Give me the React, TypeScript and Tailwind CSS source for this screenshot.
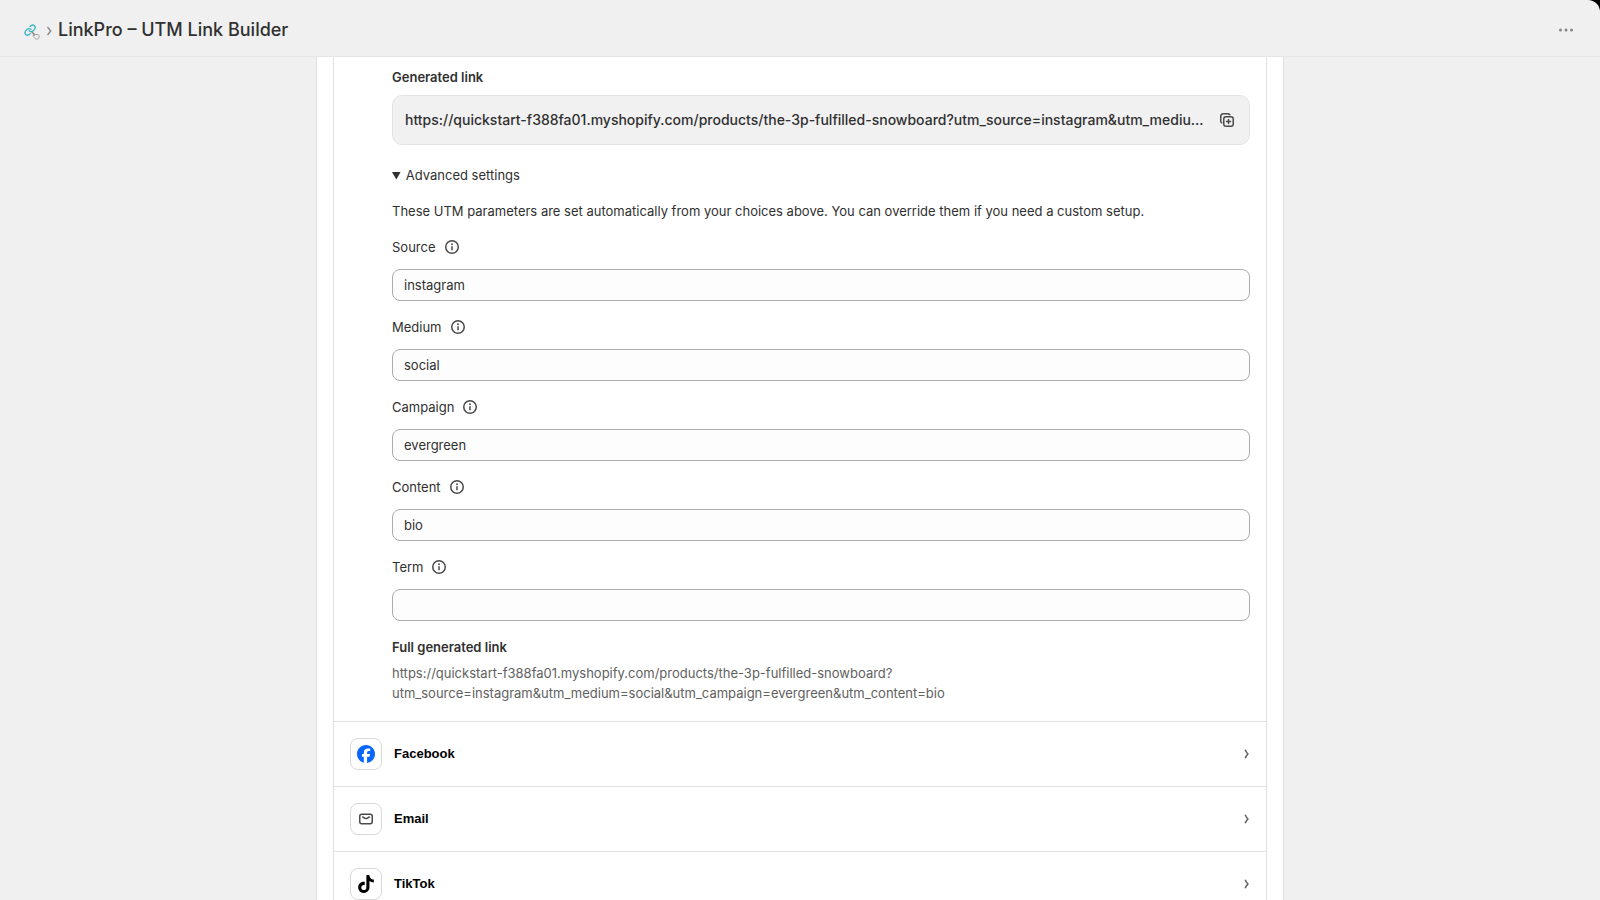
import type { ReactNode } from "react";

const FULL_URL =
  "https://quickstart-f388fa01.myshopify.com/products/the-3p-fulfilled-snowboard?utm_source=instagram&utm_medium=social&utm_campaign=evergreen&utm_content=bio";

const FIELDS = [
  { id: "source", label: "Source", value: "instagram" },
  { id: "medium", label: "Medium", value: "social" },
  { id: "campaign", label: "Campaign", value: "evergreen" },
  { id: "content", label: "Content", value: "bio" },
  { id: "term", label: "Term", value: "" },
];

function AppLogo() {
  return (
    <svg viewBox="0 -4 16 20" className="h-5 w-4" fill="none" aria-hidden="true">
      <g stroke="#3bb9c9" strokeWidth="2.7" strokeLinecap="round" strokeLinejoin="round" transform="scale(0.51)">
        <path d="M10 13a5 5 0 0 0 7.540.540l3-3a5 5 0 0 0-7.070-7.070l-1.720 1.710" />
        <path d="M14 11a5 5 0 0 0-7.540-.540l-3 3a5 5 0 0 0 7.070 7.070l1.710-1.710" />
      </g>
      <path d="M8.200 8.200l2.600 2.900" stroke="#8f8f8f" strokeWidth="1.700" strokeLinecap="round" />
      <path
        d="M10.900 10.300l3.100.4c.9.200 1.300.8 1.200 1.600l-.4 1.600c-.2.700-.6 1.100-1.300 1.100h-1.400c-.5 0-.8-.2-1.100-.6l-1.900-2c-.5-.6 0-1.100.7-.9l.9.300z"
        fill="#f0f0f0"
        stroke="#a0a0a0"
        strokeWidth="1"
        strokeLinejoin="round"
      />
    </svg>
  );
}

function InfoIcon() {
  return (
    <svg viewBox="0 0 20 20" className="size-5" fill="none" aria-hidden="true">
      <circle cx="10" cy="10" r="6.250" stroke="#4a4a4a" strokeWidth="1.500" />
      <path d="M10 9.750v3" stroke="#4a4a4a" strokeWidth="1.500" strokeLinecap="round" />
      <circle cx="10" cy="7.250" r="0.900" fill="#4a4a4a" />
    </svg>
  );
}

function DuplicateIcon() {
  return (
    <svg viewBox="0 0 20 20" className="size-5" fill="none" stroke="#4a4a4a" strokeWidth="1.500" strokeLinecap="round" strokeLinejoin="round" aria-hidden="true">
      <rect x="6.750" y="6.750" width="9.500" height="9.500" rx="2.250" />
      <path d="M4.700 12.800a2.300 2.300 0 0 1-.95-1.900V6.500a2.750 2.750 0 0 1 2.750-2.750h4.400c.8 0 1.500.4 1.900.95" />
      <path d="M11.500 9.500v4M9.500 11.500h4" />
    </svg>
  );
}

function EmailIcon() {
  return (
    <svg viewBox="0 0 20 20" className="size-5" fill="none" stroke="#4a4a4a" strokeWidth="1.500" strokeLinecap="round" strokeLinejoin="round" aria-hidden="true">
      <rect x="3.750" y="5.250" width="12.500" height="9.500" rx="2" />
      <path d="M6.700 8l2.300 1.300c.6.350 1.400.350 2 0l2.300-1.300" />
    </svg>
  );
}

function FacebookIcon() {
  return (
    <svg viewBox="0 0 24 24" className="size-[18px]" aria-hidden="true">
      <circle cx="12" cy="12" r="11.800" fill="#fff" />
      <path
        fill="#0866ff"
        d="M24 12.073c0-6.627-5.373-12-12-12s-12 5.373-12 12c0 5.600 3.870 10.330 9.101 11.630v-7.980H6.627v-3.650h2.474v-1.580c0-4.085 1.848-5.978 5.858-5.978.76 0 2.072.15 2.608.298v3.325c-.283-.03-.775-.045-1.386-.045-1.967 0-2.728.745-2.728 2.683v1.297h3.920l-.673 3.650h-3.247v8.200C19.396 23.200 24 18.180 24 12.073z"
      />
    </svg>
  );
}

function TikTokIcon() {
  return (
    <svg viewBox="0 0 24 24" className="size-[18px]" fill="#000" aria-hidden="true">
      <path d="M12.525.02c1.310-.02 2.610-.01 3.910-.02.08 1.530.63 3.090 1.750 4.170 1.120 1.110 2.700 1.620 4.240 1.790v4.030c-1.440-.05-2.890-.35-4.200-.97-.57-.26-1.100-.59-1.620-.93-.01 2.920.01 5.840-.02 8.750-.08 1.400-.54 2.790-1.350 3.940-1.310 1.920-3.580 3.170-5.910 3.210-1.430.08-2.860-.31-4.080-1.030-2.020-1.190-3.440-3.370-3.650-5.710-.02-.5-.03-1-.01-1.490.18-1.900 1.120-3.720 2.580-4.960 1.660-1.440 3.980-2.130 6.150-1.720.02 1.480-.04 2.960-.04 4.440-.99-.32-2.150-.23-3.020.37-.63.41-1.110 1.040-1.360 1.750-.21.51-.15 1.070-.14 1.610.24 1.640 1.820 3.020 3.500 2.870 1.120-.01 2.190-.66 2.770-1.610.19-.33.4-.67.41-1.060.1-1.790.06-3.570.07-5.360.01-4.030-.01-8.050.02-12.070z" />
    </svg>
  );
}

function PlatformRow({ name, icon }: { name: string; icon: ReactNode }) {
  return (
    <button type="button" className="flex w-full items-center gap-3 border-t border-[#e3e3e3] px-4 py-4 text-left">
      <span className="flex size-8 shrink-0 items-center justify-center rounded-lg border border-[#d9d9d9] bg-white">{icon}</span>
      <span className="flex-1 font-['Liberation_Sans',Arial,sans-serif] text-[13px] leading-5 font-bold text-black">{name}</span>
      <svg viewBox="0 0 6 10" className="h-2.5 w-1.5" fill="none" stroke="#616161" strokeWidth="1.500" aria-hidden="true">
        <path d="M1.200 .8Q2 3 3.900 5Q2 7 1.200 9.200" />
      </svg>
    </button>
  );
}

export default function App() {
  return (
    <div className="h-screen bg-black font-['Inter',sans-serif] text-[13px] leading-5 text-[#303030]">
      <div className="flex h-full flex-col overflow-hidden rounded-tr-xl bg-[#f0f0f0]">
        <header className="flex h-[57px] shrink-0 items-center border-b border-[#e6e6e6] px-6 pt-1">
          <a href="#home" aria-label="LinkPro home">
            <AppLogo />
          </a>
          <svg viewBox="0 -2 6 12" className="mx-1.5 h-3 w-1.5" fill="none" stroke="#8a8a8a" strokeWidth="1.400" aria-hidden="true">
            <path d="M1.500 1L4.700 5 1.500 9" />
          </svg>
          <h1 className="flex-1 text-lg leading-6 font-[550]">LinkPro – UTM Link Builder</h1>
          <button type="button" aria-label="More actions" className="flex size-5 items-center justify-center">
            <svg viewBox="0 0 20 20" className="size-5" fill="#858585" aria-hidden="true">
              <circle cx="4.500" cy="10" r="1.500" />
              <circle cx="10" cy="10" r="1.500" />
              <circle cx="15.500" cy="10" r="1.500" />
            </svg>
          </button>
        </header>

        <main className="min-h-0 flex-1 overflow-hidden">
          <div className="mx-auto max-w-[968px] border-x border-[#e0e0e0] bg-white px-4">
            <div className="border-x border-[#e0e0e0]">
              <section className="pt-2.5 pr-4 pb-[18px] pl-[58px]">
                <h2 className="font-semibold">Generated link</h2>
                <div className="mt-2 flex h-[50px] items-center gap-3 rounded-[10px] border border-[#e3e3e3] bg-[#f1f1f1] px-3">
                  <span className="min-w-0 flex-1 truncate text-sm font-medium">{FULL_URL}</span>
                  <button type="button" aria-label="Copy link">
                    <DuplicateIcon />
                  </button>
                </div>

                <details open className="mt-5">
                  <summary>Advanced settings</summary>
                  <div className="mt-4 flex flex-col gap-4">
                    <p>These UTM parameters are set automatically from your choices above. You can override them if you need a custom setup.</p>
                    {FIELDS.map((field) => (
                      <div key={field.id} className="flex flex-col gap-3">
                        <div className="flex items-center gap-1.5">
                          <label htmlFor={field.id}>{field.label}</label>
                          <button type="button" aria-label={"About " + field.label}>
                            <InfoIcon />
                          </button>
                        </div>
                        <input
                          id={field.id}
                          type="text"
                          defaultValue={field.value}
                          className="h-8 w-full rounded-lg border border-[#adadad] bg-[#fdfdfd] px-[11px]"
                        />
                      </div>
                    ))}
                  </div>
                </details>

                <h2 className="mt-4 font-semibold">Full generated link</h2>
                <p className="mt-1.5 break-words text-[#616161]">{FULL_URL}</p>
              </section>

              <PlatformRow name="Facebook" icon={<FacebookIcon />} />
              <PlatformRow name="Email" icon={<EmailIcon />} />
              <PlatformRow name="TikTok" icon={<TikTokIcon />} />
            </div>
          </div>
        </main>
      </div>
    </div>
  );
}
